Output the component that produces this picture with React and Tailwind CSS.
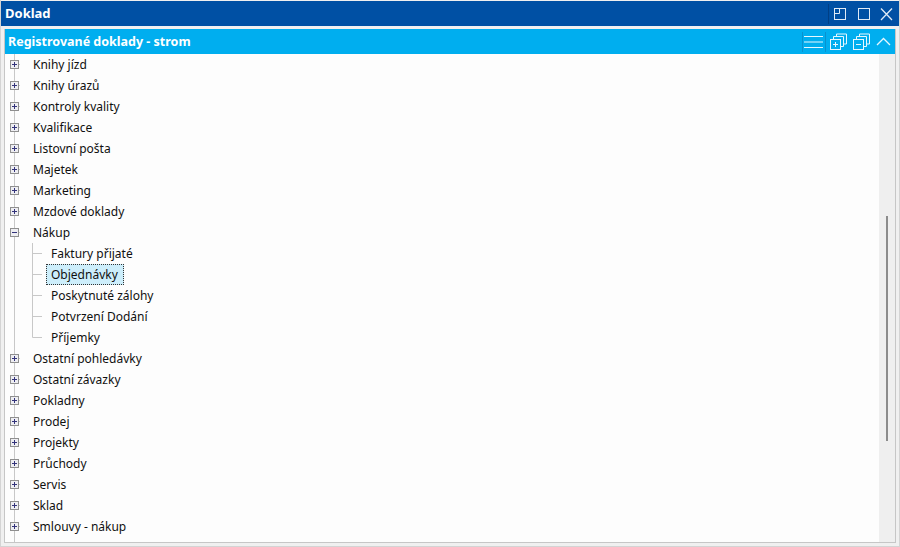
import React from 'react';

const before = ['Knihy jízd', 'Knihy úrazů', 'Kontroly kvality', 'Kvalifikace', 'Listovní pošta', 'Majetek', 'Marketing', 'Mzdové doklady'];
const children = ['Faktury přijaté', 'Objednávky', 'Poskytnuté zálohy', 'Potvrzení Dodání', 'Příjemky'];
const after = ['Ostatní pohledávky', 'Ostatní závazky', 'Pokladny', 'Prodej', 'Projekty', 'Průchody', 'Servis', 'Sklad', 'Smlouvy - nákup'];

const Expander = ({ open = false }) => (
  <svg width="16" height="21" viewBox="0 0 16 21" className="shrink-0">
    <path d="M9.5 0V21" stroke="#c8c8c8" fill="none" />
    <path d="M10 10.5H15" stroke="#c8c8c8" fill="none" />
    <rect x="5.5" y="6.5" width="8" height="8" fill="#eeeef2" stroke="#8f8f8f" />
    <path d="M7 10.5H12" stroke="#33337a" fill="none" />
    {!open && <path d="M9.5 8V13" stroke="#33337a" fill="none" />}
  </svg>
);

const Row = ({ label, open }) => (
  <div className="flex h-[21px] items-center">
    <Expander open={open} />
    <span className="ml-[12px] whitespace-nowrap">{label}</span>
  </div>
);

const ChildRow = ({ label, last, selected }) => (
  <div className="flex h-[21px] items-center">
    <svg width="41" height="21" viewBox="0 0 41 21" className="shrink-0">
      <path d="M9.5 0V21" stroke="#c8c8c8" fill="none" />
      <path d={last ? 'M27.5 0V10.5H37' : 'M27.5 0V21M28 10.5H37'} stroke="#c8c8c8" fill="none" />
    </svg>
    <span className={selected
      ? 'h-[21px] whitespace-nowrap border border-dotted border-[#333] bg-[#cdeefb] pl-[4px] pr-[5px] leading-[19px]'
      : 'ml-[5px] whitespace-nowrap'}>{label}</span>
  </div>
);

const App = () => (
  <div className="flex h-[547px] w-[900px] flex-col overflow-hidden border-x border-b border-[#d4d4d4] bg-[#f0f0f0] font-['Noto_Sans',sans-serif] text-[12px] text-[#101010]">
    <div className="mt-px flex h-[25px] items-center justify-between bg-[#0050a4] pl-[4px] pr-[3px] text-[13px] font-bold text-white">
      <span className="pt-px">Doklad</span>
      <div className="flex items-center">
        <div className="mr-px h-[20px] w-px bg-[#003f85]" />
        <svg width="66" height="25" viewBox="0 0 66 25" fill="none" stroke="#dfeaf6">
          <rect x="4.5" y="7.5" width="11" height="11" />
          <path d="M4.5 12.5H9.5V7.5" />
          <rect x="28.5" y="7.5" width="11" height="11" />
          <path d="M51 7.5L62 19M62 7.5L51 19" strokeWidth="1.3" />
        </svg>
      </div>
    </div>
    <div className="mx-[3px] mb-[3px] mt-[3px] flex min-h-0 flex-1 flex-col border-x border-b border-[#c6c6c6] bg-[#fdfdfd]">
      <div className="flex h-[25px] shrink-0 items-center justify-between bg-[#00aeef] pl-[3px] pr-[2px] text-[12.5px] font-bold text-white">
        <span className="pt-px">Registrované doklady - strom</span>
        <svg width="93" height="25" viewBox="0 0 93 25" fill="none" stroke="#e6f7fe">
          <path d="M2.5 3V23M25.5 3V23" stroke="#0892cf" />
          <path d="M4 7.5H23M4 13H23M4 18.5H23" />
          <rect x="30.5" y="10.5" width="10" height="10" fill="#00aeef" />
          <path d="M33 15.5H38M35.5 13V18" />
          <path d="M33.5 10V7.5H43.5V17.5H41M36.5 7V5H46.5V15H44" />
          <rect x="53.5" y="10.5" width="10" height="10" fill="#00aeef" />
          <path d="M56 15.5H61" />
          <path d="M56.5 10V7.5H66.5V17.5H64M59.5 7V5H69.5V15H67" />
          <path d="M77 16L83.5 9.5L90 16" strokeWidth="1.3" />
        </svg>
      </div>
      <div className="flex min-h-0 flex-1">
        <div className="min-w-0 flex-1 overflow-hidden">
          {before.map((label) => <Row key={label} label={label} />)}
          <Row label="Nákup" open />
          {children.map((label, i) => (
            <ChildRow key={label} label={label} selected={i === 1} last={i === children.length - 1} />
          ))}
          {after.map((label) => <Row key={label} label={label} />)}
          <svg width="16" height="6" className="block"><path d="M9.5 0V6" stroke="#c8c8c8" /></svg>
        </div>
        <div className="w-[16px] shrink-0 bg-[#efefef] pl-[7px] pt-[162px]">
          <div className="h-[225px] w-[2px] bg-[#8c8c8c]" />
        </div>
      </div>
    </div>
  </div>
);

export default App;
